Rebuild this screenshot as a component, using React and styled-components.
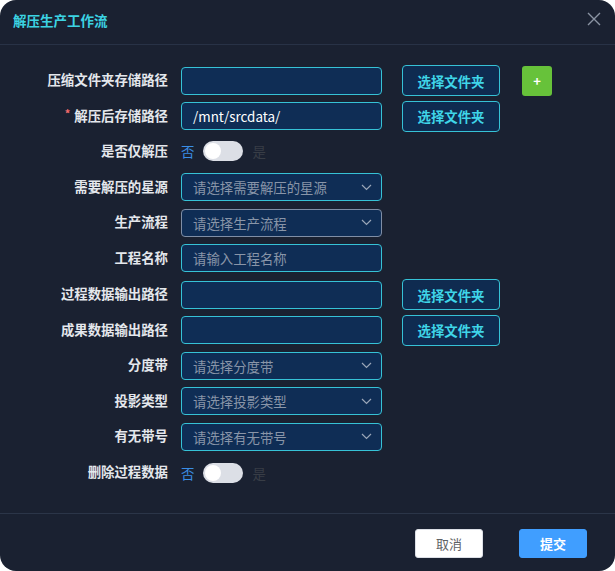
import React from "react";
import styled, { createGlobalStyle } from "styled-components";

const GlobalStyle = createGlobalStyle`
  html, body {
    margin: 0;
    padding: 0;
    background: #ffffff;
  }
  * {
    box-sizing: border-box;
  }
`;

const FONT = `"Noto Sans CJK SC", "Liberation Sans", sans-serif`;

const Dialog = styled.div`
  width: 615px;
  height: 571px;
  background: #1a2131;
  border-radius: 16px;
  font-family: ${FONT};
  display: flex;
  flex-direction: column;
  overflow: hidden;
`;

const Header = styled.div`
  height: 45px;
  flex-shrink: 0;
  display: flex;
  align-items: center;
  justify-content: space-between;
  padding: 0 14px 0 13px;
  border-bottom: 1px solid #283246;
`;

const Title = styled.div`
  color: #3cd3e2;
  font-size: 13.5px;
  font-weight: 700;
  margin-top: -5px;
`;

const Close = styled.div`
  width: 14px;
  height: 14px;
  margin-top: -6px;
  display: flex;
`;

const Body = styled.div`
  flex: 1;
  padding-top: 20px;
  display: flex;
  flex-direction: column;
  gap: 5.7px;
`;

const Row = styled.div`
  height: 30px;
  display: grid;
  grid-template-columns: 168px 201px auto auto;
  justify-content: start;
  column-gap: 13px;
  align-items: center;
`;

const Label = styled.div`
  text-align: right;
  color: #e4e7ec;
  font-size: 13.4px;
  font-weight: 700;
  white-space: nowrap;
  margin-top: -3px;

  &::before {
    content: ${(p) => (p.required ? `"*"` : `""`)};
    color: #f56c6c;
    font-size: 11px;
    margin-right: 4px;
    vertical-align: 3px;
  }
`;

const Field = styled.div`
  height: 28px;
  border-radius: 4px;
  background: #0f2d55;
  border: 1.5px solid ${(p) => (p.muted ? "#7f8ea6" : "#36c2d6")};
  display: flex;
  align-items: center;
  justify-content: space-between;
  padding: 0 9px 0 11px;
  font-size: 13.4px;
  color: ${(p) => (p.placeholder ? "#8995a8" : "#ffffff")};
  white-space: nowrap;
`;

const FolderButton = styled.div`
  width: 98px;
  height: 31px;
  margin-left: 7px;
  border-radius: 4px;
  background: #0f2b50;
  border: 1.5px solid #36c2d6;
  color: #3fd5e8;
  font-size: 13.4px;
  font-weight: 700;
  display: flex;
  align-items: center;
  justify-content: center;
`;

const AddButton = styled.div`
  width: 30px;
  height: 30px;
  margin-left: 9px;
  border-radius: 3px;
  background: #67c23a;
  color: #ffffff;
  font-size: 13px;
  font-weight: 700;
  display: flex;
  align-items: center;
  justify-content: center;
`;

const SwitchWrap = styled.div`
  display: flex;
  align-items: center;
  gap: 9px;
  font-size: 13.4px;
`;

const SwitchText = styled.span`
  color: ${(p) => (p.active ? "#3a8ee6" : "#383d46")};
`;

const Track = styled.span`
  width: 40px;
  height: 20px;
  border-radius: 10px;
  background: #dcdfe6;
  position: relative;

  &::after {
    content: "";
    position: absolute;
    left: 2px;
    top: 2px;
    width: 16px;
    height: 16px;
    border-radius: 50%;
    background: #ffffff;
  }
`;

const Footer = styled.div`
  height: 58px;
  flex-shrink: 0;
  border-top: 1px solid #2b3548;
  display: flex;
  align-items: center;
  justify-content: flex-end;
  gap: 36px;
  padding: 0 28px 0 0;
`;

const FooterButton = styled.div`
  width: 68px;
  height: 29px;
  margin-top: 1px;
  border-radius: 3px;
  background: ${(p) => (p.primary ? "#409eff" : "#ffffff")};
  border: 1px solid ${(p) => (p.primary ? "#409eff" : "#dcdfe6")};
  color: ${(p) => (p.primary ? "#ffffff" : "#606266")};
  font-size: 13px;
  font-weight: ${(p) => (p.primary ? 700 : 400)};
  display: flex;
  align-items: center;
  justify-content: center;
`;

const Chevron = () => (
  <svg width="11" height="7" viewBox="0 0 11 7" fill="none">
    <path d="M1 1l4.5 4.5L10 1" stroke="#9aa6b8" strokeWidth="1.2" />
  </svg>
);

const rows = [
  { label: "压缩文件夹存储路径", kind: "path", value: "", add: true },
  { label: "解压后存储路径", kind: "path", value: "/mnt/srcdata/", required: true },
  { label: "是否仅解压", kind: "switch" },
  { label: "需要解压的星源", kind: "select", value: "请选择需要解压的星源" },
  { label: "生产流程", kind: "select", value: "请选择生产流程", muted: true },
  { label: "工程名称", kind: "input", value: "请输入工程名称" },
  { label: "过程数据输出路径", kind: "path", value: "" },
  { label: "成果数据输出路径", kind: "path", value: "" },
  { label: "分度带", kind: "select", value: "请选择分度带" },
  { label: "投影类型", kind: "select", value: "请选择投影类型" },
  { label: "有无带号", kind: "select", value: "请选择有无带号" },
  { label: "删除过程数据", kind: "switch" },
];

function FormRow({ row }) {
  let control;
  if (row.kind === "switch") {
    control = (
      <SwitchWrap>
        <SwitchText active>否</SwitchText>
        <Track />
        <SwitchText>是</SwitchText>
      </SwitchWrap>
    );
  } else if (row.kind === "select") {
    control = (
      <Field placeholder muted={row.muted}>
        {row.value}
        <Chevron />
      </Field>
    );
  } else if (row.kind === "input") {
    control = <Field placeholder>{row.value}</Field>;
  } else {
    control = <Field>{row.value}</Field>;
  }

  return (
    <Row>
      <Label required={row.required}>{row.label}</Label>
      {control}
      {row.kind === "path" && <FolderButton>选择文件夹</FolderButton>}
      {row.add && <AddButton>+</AddButton>}
    </Row>
  );
}

export default function App() {
  return (
    <>
      <GlobalStyle />
      <Dialog>
        <Header>
          <Title>解压生产工作流</Title>
          <Close>
            <svg width="14" height="14" viewBox="0 0 14 14">
              <path d="M1 1l12 12M13 1L1 13" stroke="#8a93a3" strokeWidth="1.4" />
            </svg>
          </Close>
        </Header>
        <Body>
          {rows.map((row) => (
            <FormRow key={row.label} row={row} />
          ))}
        </Body>
        <Footer>
          <FooterButton>取消</FooterButton>
          <FooterButton primary>提交</FooterButton>
        </Footer>
      </Dialog>
    </>
  );
}
